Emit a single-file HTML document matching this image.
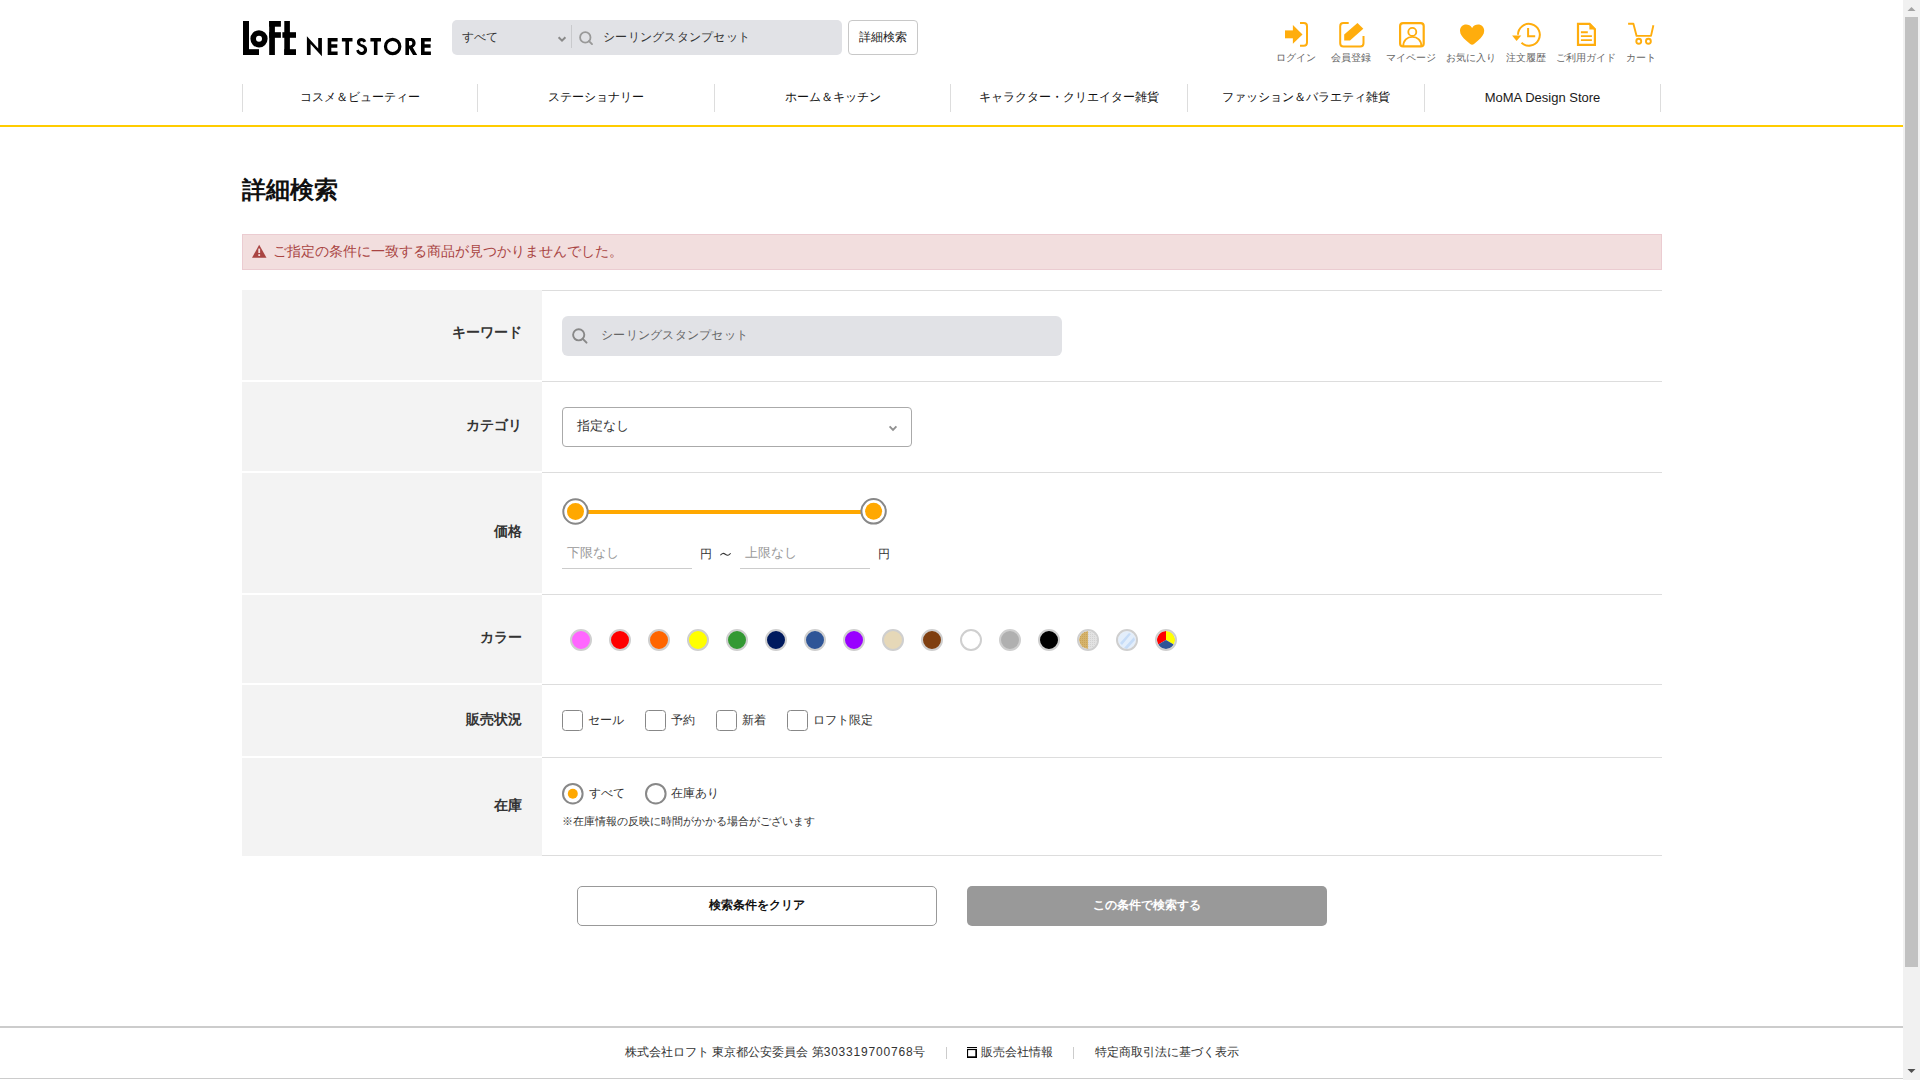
<!DOCTYPE html>
<html lang="ja">
<head>
<meta charset="utf-8">
<title>詳細検索 | LOFT NETSTORE</title>
<style>
html,body{margin:0;padding:0;}
body{width:1920px;height:1080px;overflow:hidden;position:relative;background:#fff;font-family:"Liberation Sans",sans-serif;color:#333;}
.a{position:absolute;white-space:nowrap;}
.c{text-align:center;}
svg.ov{position:absolute;left:0;top:0;}
</style>
</head>
<body>

<!-- ===== HEADER ===== -->
<div class="a" style="left:452px;top:20px;width:390px;height:35px;background:#e1e2e6;border-radius:5px;"></div>
<div class="a" style="left:571px;top:25px;width:1px;height:23px;background:#c9cacd;"></div>
<div class="a" style="left:462px;top:29px;font-size:12px;line-height:16px;color:#333;">すべて</div>
<div class="a" style="left:603px;top:29px;font-size:12.3px;letter-spacing:0.25px;line-height:16px;color:#333;">シーリングスタンプセット</div>
<div class="a" style="left:848px;top:20px;width:68px;height:33px;border:1px solid #c8c8c8;border-radius:4px;background:#fff;"></div>
<div class="a c" style="left:848px;top:29px;width:70px;font-size:12px;line-height:16px;color:#222;">詳細検索</div>

<!-- header icon labels -->
<div class="a c" style="left:1266px;top:52px;width:60px;font-size:10px;line-height:12px;color:#666;">ログイン</div>
<div class="a c" style="left:1321px;top:52px;width:60px;font-size:10px;line-height:12px;color:#666;">会員登録</div>
<div class="a c" style="left:1381px;top:52px;width:60px;font-size:10px;line-height:12px;color:#666;">マイページ</div>
<div class="a c" style="left:1441px;top:52px;width:60px;font-size:10px;line-height:12px;color:#666;">お気に入り</div>
<div class="a c" style="left:1496px;top:52px;width:60px;font-size:10px;line-height:12px;color:#666;">注文履歴</div>
<div class="a c" style="left:1551px;top:52px;width:70px;font-size:10px;line-height:12px;color:#666;">ご利用ガイド</div>
<div class="a c" style="left:1611px;top:52px;width:60px;font-size:10px;line-height:12px;color:#666;">カート</div>

<!-- nav -->
<div class="a" style="left:242px;top:84px;width:1px;height:28px;background:#ddd;"></div>
<div class="a" style="left:477px;top:84px;width:1px;height:28px;background:#ddd;"></div>
<div class="a" style="left:714px;top:84px;width:1px;height:28px;background:#ddd;"></div>
<div class="a" style="left:950px;top:84px;width:1px;height:28px;background:#ddd;"></div>
<div class="a" style="left:1187px;top:84px;width:1px;height:28px;background:#ddd;"></div>
<div class="a" style="left:1424px;top:84px;width:1px;height:28px;background:#ddd;"></div>
<div class="a" style="left:1660px;top:84px;width:1px;height:28px;background:#ddd;"></div>
<div class="a c" style="left:243px;top:89px;width:234px;font-size:12px;line-height:16px;color:#111;">コスメ＆ビューティー</div>
<div class="a c" style="left:478px;top:89px;width:236px;font-size:12px;line-height:16px;color:#111;">ステーショナリー</div>
<div class="a c" style="left:715px;top:89px;width:235px;font-size:12px;line-height:16px;color:#111;">ホーム＆キッチン</div>
<div class="a c" style="left:951px;top:89px;width:236px;font-size:12px;line-height:16px;color:#111;">キャラクター・クリエイター雑貨</div>
<div class="a c" style="left:1188px;top:89px;width:236px;font-size:12px;line-height:16px;color:#111;">ファッション＆バラエティ雑貨</div>
<div class="a c" style="left:1425px;top:90px;width:235px;font-size:13px;line-height:16px;color:#1a1a1a;">MoMA Design Store</div>
<div class="a" style="left:0;top:125px;width:1903px;height:2px;background:#ffcc00;"></div>

<!-- ===== MAIN ===== -->
<div class="a" style="left:242px;top:176px;font-size:24px;line-height:28px;font-weight:bold;color:#111;">詳細検索</div>

<div class="a" style="left:242px;top:234px;width:1418px;height:34px;background:#f2dede;border:1px solid #ebccd1;"></div>
<div class="a" style="left:273px;top:243px;font-size:14px;line-height:17px;color:#a94442;">ご指定の条件に一致する商品が見つかりませんでした。</div>

<!-- MAIN_TABLE -->
<div class="a" style="left:242px;top:290px;width:300px;height:90px;background:#f3f3f3;"></div>
<div class="a" style="left:242px;top:382px;width:300px;height:89px;background:#f3f3f3;"></div>
<div class="a" style="left:242px;top:473px;width:300px;height:120px;background:#f3f3f3;"></div>
<div class="a" style="left:242px;top:595px;width:300px;height:88px;background:#f3f3f3;"></div>
<div class="a" style="left:242px;top:685px;width:300px;height:71px;background:#f3f3f3;"></div>
<div class="a" style="left:242px;top:758px;width:300px;height:98px;background:#f3f3f3;"></div>
<div class="a" style="left:542px;top:290px;width:1120px;height:1px;background:#ddd;"></div>
<div class="a" style="left:542px;top:381px;width:1120px;height:1px;background:#ddd;"></div>
<div class="a" style="left:542px;top:472px;width:1120px;height:1px;background:#ddd;"></div>
<div class="a" style="left:542px;top:594px;width:1120px;height:1px;background:#ddd;"></div>
<div class="a" style="left:542px;top:684px;width:1120px;height:1px;background:#ddd;"></div>
<div class="a" style="left:542px;top:757px;width:1120px;height:1px;background:#ddd;"></div>
<div class="a" style="left:542px;top:855px;width:1120px;height:1px;background:#ddd;"></div>

<div class="a" style="right:1398px;top:324px;font-size:14px;line-height:17px;font-weight:bold;color:#333;">キーワード</div>
<div class="a" style="right:1398px;top:417px;font-size:14px;line-height:17px;font-weight:bold;color:#333;">カテゴリ</div>
<div class="a" style="right:1398px;top:523px;font-size:14px;line-height:17px;font-weight:bold;color:#333;">価格</div>
<div class="a" style="right:1398px;top:629px;font-size:14px;line-height:17px;font-weight:bold;color:#333;">カラー</div>
<div class="a" style="right:1398px;top:711px;font-size:14px;line-height:17px;font-weight:bold;color:#333;">販売状況</div>
<div class="a" style="right:1398px;top:797px;font-size:14px;line-height:17px;font-weight:bold;color:#333;">在庫</div>

<!-- keyword input -->
<div class="a" style="left:562px;top:316px;width:500px;height:40px;background:#e1e2e6;border-radius:6px;"></div>
<div class="a" style="left:601px;top:327px;font-size:12.3px;letter-spacing:0.25px;line-height:16px;color:#666;">シーリングスタンプセット</div>

<!-- category select -->
<div class="a" style="left:562px;top:407px;width:348px;height:38px;border:1px solid #aaa;border-radius:4px;background:#fff;"></div>
<div class="a" style="left:577px;top:418px;font-size:13px;line-height:16px;color:#333;">指定なし</div>

<!-- price inputs -->
<div class="a" style="left:562px;top:568px;width:130px;height:1px;background:#ccc;"></div>
<div class="a" style="left:740px;top:568px;width:130px;height:1px;background:#ccc;"></div>
<div class="a" style="left:567px;top:545px;font-size:13px;line-height:16px;color:#999;">下限なし</div>
<div class="a" style="left:745px;top:545px;font-size:13px;line-height:16px;color:#999;">上限なし</div>
<div class="a" style="left:700px;top:546px;font-size:12px;line-height:16px;color:#333;">円</div>
<div class="a" style="left:878px;top:546px;font-size:12px;line-height:16px;color:#333;">円</div>

<!-- sales status -->
<div class="a" style="left:588px;top:712px;font-size:12px;line-height:16px;color:#333;">セール</div>
<div class="a" style="left:671px;top:712px;font-size:12px;line-height:16px;color:#333;">予約</div>
<div class="a" style="left:742px;top:712px;font-size:12px;line-height:16px;color:#333;">新着</div>
<div class="a" style="left:813px;top:712px;font-size:12px;line-height:16px;color:#333;">ロフト限定</div>

<!-- stock -->
<div class="a" style="left:589px;top:785px;font-size:12px;line-height:16px;color:#333;">すべて</div>
<div class="a" style="left:671px;top:785px;font-size:12px;line-height:16px;color:#333;">在庫あり</div>
<div class="a" style="left:562px;top:813px;font-size:11px;line-height:16px;color:#333;">※在庫情報の反映に時間がかかる場合がございます</div>

<!-- BUTTONS -->
<div class="a" style="left:577px;top:886px;width:358px;height:38px;border:1px solid #999;border-radius:5px;background:#fff;"></div>
<div class="a c" style="left:577px;top:897px;width:360px;font-size:12px;line-height:16px;font-weight:bold;color:#111;">検索条件をクリア</div>
<div class="a" style="left:967px;top:886px;width:360px;height:40px;border-radius:5px;background:#999;"></div>
<div class="a c" style="left:967px;top:897px;width:360px;font-size:12px;line-height:16px;font-weight:bold;color:#fff;">この条件で検索する</div>

<!-- FOOTER -->
<div class="a" style="left:0;top:1026px;width:1903px;height:2px;background:#ccc;"></div>
<div class="a" style="left:0;top:1078px;width:1903px;height:1px;background:#ccc;"></div>
<div class="a" style="left:625px;top:1044px;font-size:12px;line-height:16px;color:#333;">株式会社ロフト 東京都公安委員会 第<span style="letter-spacing:0.8px">303319700768</span>号</div>
<div class="a" style="left:946px;top:1047px;width:1px;height:12px;background:#ccc;"></div>
<div class="a" style="left:981px;top:1044px;font-size:12px;line-height:16px;color:#333;">販売会社情報</div>
<div class="a" style="left:1073px;top:1047px;width:1px;height:12px;background:#ccc;"></div>
<div class="a" style="left:1095px;top:1044px;font-size:12px;line-height:16px;color:#333;">特定商取引法に基づく表示</div>

<!-- scrollbar -->
<div class="a" style="left:1903px;top:0;width:17px;height:1080px;background:#f1f1f1;"></div>
<div class="a" style="left:1905px;top:17px;width:13px;height:950px;background:#c1c1c1;"></div>

<!-- SVG OVERLAY -->
<svg class="ov" width="1920" height="1080" viewBox="0 0 1920 1080">
<defs>
  <pattern id="glit" width="2" height="2" patternUnits="userSpaceOnUse"><rect width="2" height="2" fill="#d5b36c"/><rect width="1" height="1" fill="#c9a45a"/></pattern>
  <pattern id="silv" width="2" height="2" patternUnits="userSpaceOnUse"><rect width="2" height="2" fill="#e2e2e2"/><rect width="1" height="1" fill="#d2d2d2"/></pattern>
</defs>
<!-- logo LoFt -->
<g fill="#000">
  <rect x="243" y="21" width="6" height="34"/>
  <rect x="243" y="49.2" width="16" height="5.8"/>
  <circle cx="259" cy="38.8" r="5.8" fill="none" stroke="#000" stroke-width="5.6"/>
  <rect x="269.2" y="21" width="5.7" height="34"/>
  <rect x="269.2" y="21" width="11.7" height="5.7"/>
  <rect x="269.2" y="32.2" width="11.7" height="5.6"/>
  <rect x="284.3" y="21" width="5.6" height="34"/>
  <rect x="282.4" y="32.2" width="13.6" height="5.6"/>
  <rect x="284.3" y="49.2" width="11.7" height="5.8"/>
</g>
<!-- NETSTORE -->
<g fill="#000">
  <path d="M306.9,55 L306.9,36.3 L318.2,48.6 L318.2,38 L321.9,38 L321.9,56.2 L310.6,43.9 L310.6,55 Z"/>
  <path d="M327.7,38 H337.6 V41.6 H331.3 V44.3 H337.3 V47.7 H331.3 V51.4 H337.6 V55 H327.7 Z"/>
  <path d="M341.9,38 H352.5 V41.6 H349 V55 H345.4 V41.6 H341.9 Z"/>
  <path d="M366.2,41.2 C365.3,39.2 363.6,38.1 361.5,38.1 C358.6,38.1 356.9,40 356.9,42.3 C356.9,44.9 358.9,45.9 361.4,46.9 C363.3,47.6 363.9,48.3 363.9,49.8 C363.9,51.2 362.9,51.9 361.6,51.9 C360.2,51.9 359.1,50.9 358.8,49.5 L356.2,50.5 C356.9,53.3 359,55.1 361.6,55.1 C364.9,55.1 367.1,52.9 367.1,49.8 C367.1,46.9 365.2,45.6 362.8,44.6 C360.9,43.9 360.2,43.4 360.2,42.2 C360.2,41.2 360.9,41.3 361.6,41.3 C362.4,41.3 363.1,41.8 363.5,42.6 Z"/>
  <path d="M370.4,38 H381 V41.6 H377.5 V55 H373.9 V41.6 H370.4 Z"/>
  <circle cx="392.65" cy="46.45" r="7.15" fill="none" stroke="#000" stroke-width="3.2"/>
  <path d="M405.4,38 H410.8 C413.6,38 415.6,40.3 415.6,43.1 C415.6,45.3 414.5,46.9 412.8,47.6 L417.2,55 H413.1 L409.2,48.4 H409 V55 H405.4 Z M409,40.9 V45.4 H410.6 C411.7,45.4 412.3,44.4 412.3,43.1 C412.3,41.8 411.7,40.9 410.6,40.9 Z"/>
  <path d="M421,38 H430.9 V41.6 H424.6 V44.3 H430.6 V47.7 H424.6 V51.4 H430.9 V55 H421 Z"/>
</g>

<!-- header search chevron + magnifier -->
<path d="M558.6,37.2 L562,40.6 L565.4,37.2" fill="none" stroke="#8a8a8a" stroke-width="2"/>
<circle cx="585.3" cy="37.4" r="5.2" fill="none" stroke="#999" stroke-width="1.8"/>
<line x1="589" y1="41.1" x2="592" y2="44.1" stroke="#999" stroke-width="1.9" stroke-linecap="round"/>

<!-- header icons -->
<g fill="#ffad0d" stroke="none">
  <rect x="1285" y="30.4" width="8.5" height="7.9"/>
  <polygon points="1292.9,25 1302.5,34.4 1292.9,43.8"/>
  <polygon points="1344.2,34.6 1357.5,22.9 1363.3,28.75 1350,40.4 1344.2,40.4"/>
  <path d="M1472.1,27.9 C1470.6,25.5 1468.4,24.6 1466.1,24.6 C1462.6,24.6 1460,27.3 1460,30.8 C1460,34.5 1462.6,37.5 1466.1,40.5 L1470.2,43.9 C1471.3,44.9 1472.9,44.9 1474,43.9 L1478.1,40.5 C1481.6,37.5 1484.2,34.5 1484.2,30.8 C1484.2,27.3 1481.6,24.6 1478.1,24.6 C1475.8,24.6 1473.6,25.5 1472.1,27.9 Z"/>
  <polygon points="1512.1,35.4 1521.3,35.4 1516.6,40.9"/>
  <polygon points="1589.4,22.8 1596,29.4 1589.4,29.4"/>
</g>
<g fill="none" stroke="#ffad0d" stroke-width="2">
  <path d="M1300,23 H1303.8 Q1307,23 1307,26.2 V42.6 Q1307,45.8 1303.8,45.8 H1300"/>
  <path d="M1348.7,23 H1343.4 Q1340.2,23 1340.2,26.2 V43.3 Q1340.2,46.5 1343.4,46.5 H1360.3 Q1363.5,46.5 1363.5,43.3 V36"/>
  <rect x="1400.1" y="23.1" width="23.6" height="23.3" rx="3" stroke-width="2.2"/>
  <circle cx="1412.3" cy="31.9" r="4" stroke-width="1.8"/>
  <path d="M1403.2,46.4 C1403.2,40.4 1407.2,36.9 1412.3,36.9 C1417.4,36.9 1421.4,40.4 1421.4,46.4" stroke-width="1.8"/>
  <path d="M1518,34.8 A10.9,10.9 0 1 1 1521.5,42.8"/>
  <path d="M1528.1,27.9 V36.2 H1535.2"/>
  <path d="M1578,23.9 H1589.6 L1594.9,29.2 V44.8 H1578 Z" stroke-width="2.2"/>
  <path d="M1580.9,32.2 H1587.8 M1580.9,36.1 H1591.9 M1580.9,40.1 H1591.9" stroke-width="1.9"/>
  <path d="M1628.1,23.75 H1633.4 L1636.6,35.9 H1651 L1653.4,25.3" stroke-width="1.9" stroke-linejoin="round"/>
  <circle cx="1638.75" cy="41.25" r="2.45" stroke-width="1.9"/>
  <circle cx="1648.4" cy="41.25" r="2.45" stroke-width="1.9"/>
</g>

<!-- alert triangle -->
<path d="M259.2,244.8 L266.5,257.8 H252 Z" fill="#a94442"/>
<rect x="258.3" y="248.6" width="1.8" height="4.4" fill="#f2dede"/>
<rect x="258.3" y="254.2" width="1.8" height="1.8" fill="#f2dede"/>

<!-- keyword magnifier -->
<circle cx="578.7" cy="334.8" r="5.6" fill="none" stroke="#888" stroke-width="1.9"/>
<line x1="582.8" y1="338.9" x2="586.5" y2="342.6" stroke="#888" stroke-width="2" stroke-linecap="round"/>

<!-- category chevron -->
<path d="M889.6,426.3 L893,429.8 L896.4,426.3" fill="none" stroke="#909090" stroke-width="1.9"/>

<!-- tilde -->
<path d="M720.4,555.2 C721.9,553.1 723.6,552.9 725.3,554.2 C727.1,555.6 728.9,555.7 730.6,553.3" fill="none" stroke="#333" stroke-width="1.1"/>
<!-- price slider -->
<rect x="588" y="510" width="273" height="4" fill="#ffa800"/>
<circle cx="575.5" cy="511.5" r="12.2" fill="#fff" stroke="#888" stroke-width="2"/>
<circle cx="575.5" cy="511.5" r="8.5" fill="#ffa800"/>
<circle cx="873.6" cy="511.3" r="12.2" fill="#fff" stroke="#888" stroke-width="2"/>
<circle cx="873.6" cy="511.3" r="8.5" fill="#ffa800"/>

<!-- color swatches -->
<g stroke="#cfcfcf" stroke-width="2">
  <circle cx="581" cy="640" r="10" fill="#ff66ff"/>
  <circle cx="620" cy="640" r="10" fill="#ff0000"/>
  <circle cx="659" cy="640" r="10" fill="#ff6600"/>
  <circle cx="698" cy="640" r="10" fill="#ffff00"/>
  <circle cx="737" cy="640" r="10" fill="#339933"/>
  <circle cx="776" cy="640" r="10" fill="#001a5e"/>
  <circle cx="815" cy="640" r="10" fill="#2f5597"/>
  <circle cx="854" cy="640" r="10" fill="#9900ff"/>
  <circle cx="893" cy="640" r="10" fill="#e6d8b8"/>
  <circle cx="932" cy="640" r="10" fill="#7f3f10"/>
  <circle cx="971" cy="640" r="10" fill="#ffffff"/>
  <circle cx="1010" cy="640" r="10" fill="#b0b0b0"/>
  <circle cx="1049" cy="640" r="10" fill="#000000"/>
</g>
<path d="M1088,631 A9,9 0 0 0 1088,649 Z" fill="url(#glit)"/>
<path d="M1088,631 A9,9 0 0 1 1088,649 Z" fill="url(#silv)"/>
<circle cx="1088" cy="640" r="10" fill="none" stroke="#cfcfcf" stroke-width="2"/>
<circle cx="1127" cy="640" r="9" fill="#e3eefb"/>
<path d="M1120,643 L1129,633 L1131,634 L1122,645 Z M1124,648 L1134,637 L1135,640 L1127,649 Z" fill="#c6dcf7"/>
<circle cx="1127" cy="640" r="10" fill="none" stroke="#cfcfcf" stroke-width="2"/>
<path d="M1166,640 L1166,631 A9,9 0 0 0 1158.2,644.5 Z" fill="#ff0000"/>
<path d="M1166,640 L1166,631 A9,9 0 0 1 1173.8,644.5 Z" fill="#ffff00"/>
<path d="M1166,640 L1158.2,644.5 A9,9 0 0 0 1173.8,644.5 Z" fill="#2f5597"/>
<circle cx="1166" cy="640" r="10" fill="none" stroke="#cfcfcf" stroke-width="2"/>

<!-- checkboxes -->
<g fill="#fff" stroke="#888" stroke-width="1">
  <rect x="562.5" y="710.5" width="20" height="20" rx="3"/>
  <rect x="645.5" y="710.5" width="20" height="20" rx="3"/>
  <rect x="716.5" y="710.5" width="20" height="20" rx="3"/>
  <rect x="787.5" y="710.5" width="20" height="20" rx="3"/>
</g>

<!-- radios -->
<circle cx="572.8" cy="793.7" r="9.8" fill="#fff" stroke="#888" stroke-width="2"/>
<circle cx="572.8" cy="793.7" r="5" fill="#ffa800"/>
<circle cx="655.8" cy="793.7" r="9.8" fill="#fff" stroke="#888" stroke-width="2"/>

<!-- footer box icon -->
<rect x="967" y="1047" width="10" height="1.1" fill="#000"/>
<rect x="967" y="1049" width="10" height="9" fill="#000"/>
<rect x="968.1" y="1050.1" width="7.2" height="6.2" fill="#fff"/>

<!-- scrollbar arrows -->
<path d="M1907.5,11 L1911.5,7 L1915.5,11 Z" fill="#a3a3a3"/>
<path d="M1907.5,1069 L1911.5,1073 L1915.5,1069 Z" fill="#505050"/>
</svg>

</body>
</html>
